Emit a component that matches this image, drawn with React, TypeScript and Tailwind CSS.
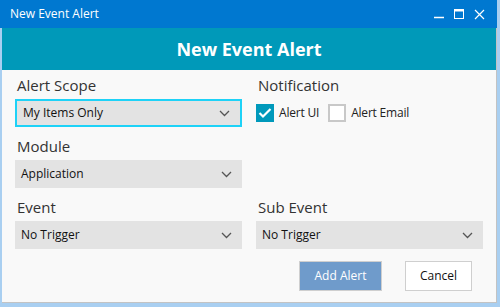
import React, { useState } from 'react';

const font = { fontFamily: '"Open Sans", "Noto Sans", sans-serif' };

function Chevron() {
  return (
    <svg width="11" height="7" viewBox="0 0 11 7" className="shrink-0">
      <path d="M1 1 L5.5 5.5 L10 1" fill="none" stroke="#555" strokeWidth="1.3" />
    </svg>
  );
}

function Select({ value, focused }: { value: string; focused?: boolean }) {
  return (
    <div
      className={`h-[28px] flex items-center justify-between bg-[#e3e3e3] pl-[6px] pr-[10px] text-[12px] text-[#111] ${
        focused ? 'border-2 border-[#1ed2f7] pl-[4px] pr-[8px]' : ''
      }`}
    >
      <span>{value}</span>
      <Chevron />
    </div>
  );
}

function Field({ label, children }: { label: string; children: React.ReactNode }) {
  return (
    <div className="flex flex-col">
      <div className="h-[20px] leading-[20px] text-[15px] text-[#333] pl-[2px] mb-[4px]">{label}</div>
      {children}
    </div>
  );
}

function Checkbox({ checked, label, onClick }: { checked: boolean; label: string; onClick: () => void }) {
  return (
    <button className="flex items-center gap-[5px]" onClick={onClick}>
      {checked ? (
        <span className="w-[18px] h-[18px] bg-[#0099bb] flex items-center justify-center">
          <svg width="14" height="12" viewBox="0 0 14 12">
            <path d="M1.5 6 L5 9.5 L12.5 2" fill="none" stroke="#fff" strokeWidth="2.2" />
          </svg>
        </span>
      ) : (
        <span className="w-[18px] h-[18px] border-2 border-[#c8c8c8] bg-white" />
      )}
      <span className="text-[12px] tracking-[-0.2px] text-[#222]">{label}</span>
    </button>
  );
}

export default function App() {
  const [alertUi, setAlertUi] = useState(true);
  const [alertEmail, setAlertEmail] = useState(false);

  return (
    <div className="w-[500px] h-[307px] bg-[#a9cff1] overflow-hidden" style={font}>
      {/* Title bar */}
      <div className="w-[497px] h-[28px] bg-[#0078d0] flex items-center justify-between pl-[10px] pr-[12px] text-white">
        <span className="text-[12px]">New Event Alert</span>
        <div className="flex items-center gap-[10px]">
          <svg width="10" height="10" viewBox="0 0 10 10">
            <path d="M0 8.5 H10" stroke="#fff" strokeWidth="1.5" />
          </svg>
          <svg width="10" height="10" viewBox="0 0 10 10">
            <rect x="0.5" y="0.5" width="9" height="9" fill="none" stroke="#fff" strokeWidth="1" />
            <path d="M0 1.5 H10" stroke="#fff" strokeWidth="2" />
          </svg>
          <svg width="11" height="11" viewBox="0 0 11 11">
            <path d="M1 1 L10 10 M10 1 L1 10" stroke="#fff" strokeWidth="1.2" />
          </svg>
        </div>
      </div>

      {/* Body */}
      <div className="ml-[2px] w-[495px] h-[275px] bg-[#f9f9f9] border-r border-b border-[#c3c3c3]">
        <div className="h-[42px] bg-[#0099b9] flex items-center justify-center">
          <span className="text-[18px] font-bold text-white">New Event Alert</span>
        </div>

        <div className="px-[13px] pt-[5px]">
          <div className="grid grid-cols-2 gap-x-[14px] gap-y-[9px]">
            <Field label="Alert Scope">
              <Select value="My Items Only" focused />
            </Field>
            <Field label="Notification">
              <div className="h-[28px] flex items-center gap-[9px]">
                <Checkbox checked={alertUi} label="Alert UI" onClick={() => setAlertUi(!alertUi)} />
                <Checkbox checked={alertEmail} label="Alert Email" onClick={() => setAlertEmail(!alertEmail)} />
              </div>
            </Field>
            <Field label="Module">
              <Select value="Application" />
            </Field>
            <div />
            <Field label="Event">
              <Select value="No Trigger" />
            </Field>
            <Field label="Sub Event">
              <Select value="No Trigger" />
            </Field>
          </div>

          <div className="flex justify-end gap-[23px] mt-[12px] pr-[11px]">
            <button className="w-[83px] h-[30px] bg-[#6f9bcb] border border-[#cfcfcf] text-white text-[12px]">
              Add Alert
            </button>
            <button className="w-[67px] h-[30px] bg-white border border-[#cfcfcf] text-[#111] text-[12px]">
              Cancel
            </button>
          </div>
        </div>
      </div>
    </div>
  );
}
